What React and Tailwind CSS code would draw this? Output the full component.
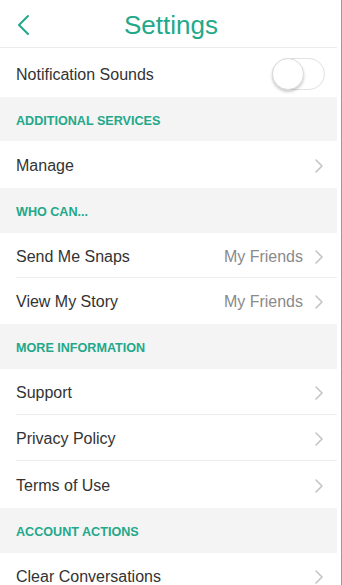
import React from "react";

const Chevron = () => (
  <svg width="10" height="16" viewBox="0 0 10 16" className="shrink-0">
    <path d="M2 2 L8 8 L2 14" fill="none" stroke="#c4c4c4" strokeWidth="1.6" strokeLinecap="round" strokeLinejoin="round" />
  </svg>
);

const Section = ({ title, h = "h-[45px]" }) => (
  <div className={`${h} shrink-0 bg-[#f4f4f4] flex items-center pl-4 pt-[4px]`}>
    <span className="text-[12.6px] font-bold text-[#23a88a]">{title}</span>
  </div>
);

const Row = ({ label, value, sep, h = "h-[46px]" }) => (
  <div className={`${h} shrink-0 bg-white flex items-center pl-4 relative pt-[2px]`}>
    <span className="flex-1 text-[16px] text-[#333333]">{label}</span>
    {value && <span className="text-[16px] text-[#8a8a8a] mr-[11px]">{value}</span>}
    <div className="mr-[13px]"><Chevron /></div>
    {sep && <div className="absolute left-4 right-0 bottom-0 h-px bg-[#ececec]" />}
  </div>
);

export default function App() {
  return (
    <div className="w-[342px] h-[585px] overflow-hidden bg-white flex" style={{ fontFamily: '"Liberation Sans", Arial, sans-serif' }}>
      <div className="w-[337px] shrink-0 flex flex-col">
        <div className="h-[48px] shrink-0 flex items-center relative border-b border-[#ececec] pt-[3px]">
          <div className="pl-[17px] flex items-center">
            <svg width="14" height="22" viewBox="0 0 14 22">
              <path d="M11 2 L2 11 L11 20" fill="none" stroke="#23a88a" strokeWidth="2" strokeLinecap="round" strokeLinejoin="round" />
            </svg>
          </div>
          <div className="absolute inset-0 flex items-center justify-center pointer-events-none pt-[3px]">
            <span className="text-[26px] text-[#23a88a] ml-[5px]">Settings</span>
          </div>
        </div>
        <div className="h-[49px] shrink-0 flex items-center pl-4 pt-[3px]">
          <span className="flex-1 text-[16px] text-[#333333] pt-[2px]">Notification Sounds</span>
          <div className="w-[53px] h-[32px] rounded-full border border-[#e2e2e2] bg-white mr-[12px] relative">
            <div className="absolute left-[-1px] top-[-1px] w-[32px] h-[32px] rounded-full bg-white border border-[#dcdcdc] shadow-[0_2px_3px_rgba(0,0,0,0.2)]" />
          </div>
        </div>
        <Section title="ADDITIONAL SERVICES" h="h-[44px]" />
        <Row label="Manage" h="h-[47px]" />
        <Section title="WHO CAN..." />
        <Row label="Send Me Snaps" value="My Friends" sep h="h-[45px]" />
        <Row label="View My Story" value="My Friends" />
        <Section title="MORE INFORMATION" />
        <Row label="Support" sep />
        <Row label="Privacy Policy" sep />
        <Row label="Terms of Use" h="h-[47px]" />
        <Section title="ACCOUNT ACTIONS" />
        <Row label="Clear Conversations" />
      </div>
      <div className="flex-1 border-r border-[#9a9a9a]" />
    </div>
  );
}
